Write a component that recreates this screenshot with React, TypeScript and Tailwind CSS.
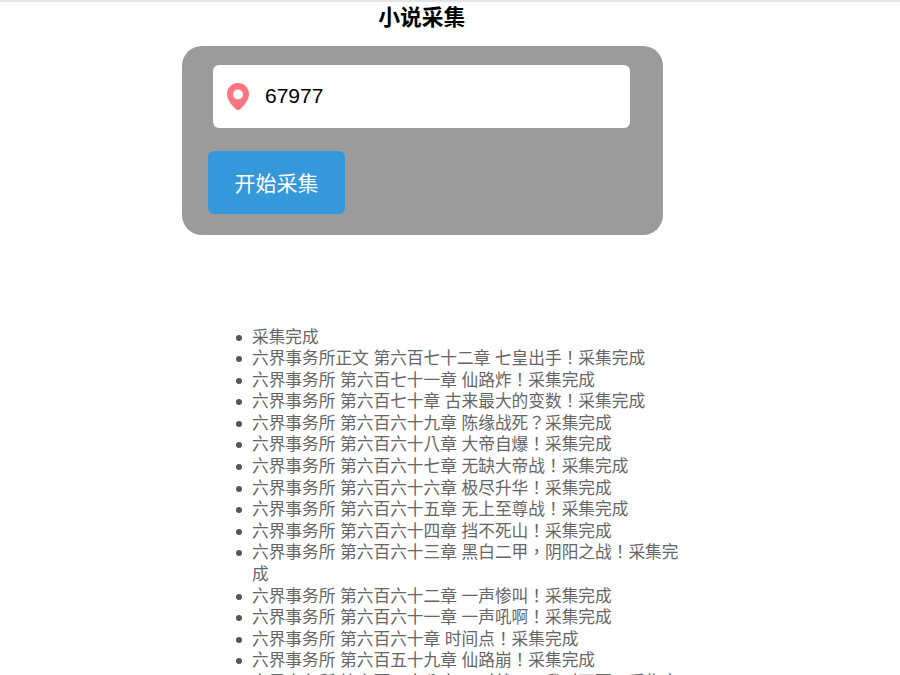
import React from "react";

const rows = [
  "采集完成",
  "六界事务所正文 第六百七十二章 七皇出手！采集完成",
  "六界事务所 第六百七十一章 仙路炸！采集完成",
  "六界事务所 第六百七十章 古来最大的变数！采集完成",
  "六界事务所 第六百六十九章 陈缘战死？采集完成",
  "六界事务所 第六百六十八章 大帝自爆！采集完成",
  "六界事务所 第六百六十七章 无缺大帝战！采集完成",
  "六界事务所 第六百六十六章 极尽升华！采集完成",
  "六界事务所 第六百六十五章 无上至尊战！采集完成",
  "六界事务所 第六百六十四章 挡不死山！采集完成",
  "六界事务所 第六百六十三章 黑白二甲，阴阳之战！采集完成",
  "六界事务所 第六百六十二章 一声惨叫！采集完成",
  "六界事务所 第六百六十一章 一声吼啊！采集完成",
  "六界事务所 第六百六十章 时间点！采集完成",
  "六界事务所 第六百五十九章 仙路崩！采集完成",
  "六界事务所 第六百五十八章 五对战三，我对两百！采集完成",
];

export default function App() {
  return (
    <div className="h-[675px] overflow-hidden bg-white font-['Liberation_Sans','Noto_Sans_CJK_TC',sans-serif]">
      <div className="h-0.5 bg-[#e5e5e5]" />
      <div className="w-[480.5px] ml-[182px]">
        <h1 className="text-[21.8px] leading-[30px] pt-px -mb-px pr-px font-bold text-black text-center">小说采集</h1>
        <div className="mt-[14px] h-[189px] rounded-[20px] bg-[#9b9b9b] pt-[19px]">
          <div className="ml-[31px] w-[417px] h-[63px] rounded-md bg-white flex items-center pl-[14px]">
            <svg width="22" height="27" viewBox="0 0 22 27">
              <path
                fillRule="evenodd"
                fill="#fd7580"
                d="M11 0C4.900 0 0 4.800 0 11c0 5.500 4.500 11.500 9 15.300 1.200 1 2.800 1 4 0 4.500-3.800 9-9.800 9-15.300C22 4.800 17.100 0 11 0zm0 6.500a5 5 0 1 1 0 10 5 5 0 0 1 0-10z"
              />
            </svg>
            <span className="ml-[16px] -mt-[2px] text-[21px] text-black">67977</span>
          </div>
          <button className="ml-[26px] mt-[23px] block w-[137px] h-[63px] pt-[2px] rounded-md bg-[#3498db] text-white text-[21px]">
            开始采集
          </button>
        </div>
      </div>
      <ul className="mt-[91.5px] ml-[236px] w-[446px] text-[16.7px] leading-[21.6px] text-[#666666]">
        {rows.map((r) => (
          <li key={r} className="flex">
            <span className="mt-[8px] mr-[10px] h-[6px] w-[6px] shrink-0 rounded-full bg-[#555555]" />
            <span>{r}</span>
          </li>
        ))}
      </ul>
    </div>
  );
}
